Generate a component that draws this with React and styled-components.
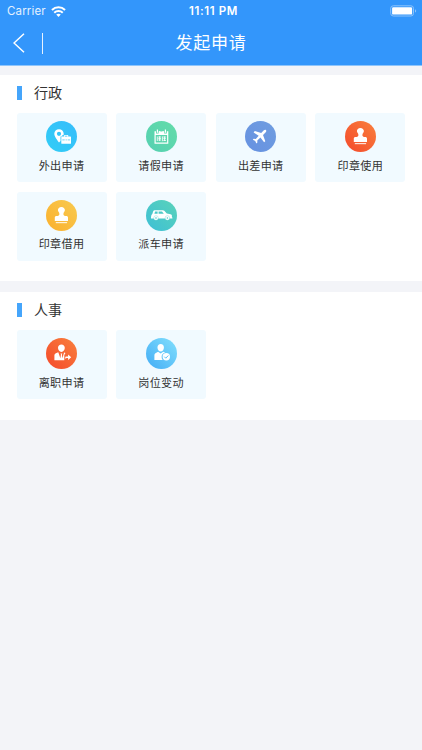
import React from "react";
import styled, { createGlobalStyle } from "styled-components";

const GlobalStyle = createGlobalStyle`
  * { box-sizing: border-box; }
  body {
    margin: 0;
    background: #f3f4f8;
    font-family: Inter, "Noto Sans CJK SC", sans-serif;
  }
`;

const Screen = styled.main`
  width: 100%;
  min-height: 750px;
  background: #f3f4f8;
`;

const Header = styled.header`
  height: 66px;
  background: #3396fb;
  border-bottom: 1px solid #8fc5fb;
  color: #fff;
`;

const StatusBar = styled.div`
  height: 22px;
  padding: 0 5px 0 7px;
  display: grid;
  grid-template-columns: 1fr auto 1fr;
  align-items: center;
  font-size: 11.5px;
  line-height: 22px;
`;

const Carrier = styled.div`
  display: flex;
  align-items: center;
  gap: 5px;
  letter-spacing: 0.15px;
  color: #e3f1ff;
`;

const Clock = styled.time`
  font-weight: 600;
  font-size: 11.5px;
  letter-spacing: 0.65px;
  padding-left: 3px;
`;

const BatterySlot = styled.div`
  display: flex;
  justify-content: flex-end;
`;

const NavBar = styled.div`
  height: 42px;
  display: grid;
  grid-template-columns: 60px 1fr 60px;
  align-items: center;
`;

const BackButton = styled.button`
  display: flex;
  align-items: center;
  gap: 17px;
  padding: 0 0 0 13px;
  border: 0;
  background: none;
`;

const Divider = styled.span`
  width: 1px;
  height: 21px;
  background: #e6f2ff;
`;

const PageTitle = styled.h1`
  margin: 0;
  text-align: center;
  font-size: 17px;
  line-height: 24px;
  font-weight: 400;
  letter-spacing: 0.7px;
`;

const Section = styled.section`
  height: ${(p) => p.$height}px;
  margin-top: ${(p) => p.$gap}px;
  padding: 0 16.5px;
  background: #fff;
`;

const SectionTitle = styled.h2`
  display: flex;
  align-items: center;
  gap: 12.5px;
  height: 37px;
  margin: 0 0 1.5px;
  font-size: 14.1px;
  line-height: 20px;
  font-weight: 400;
  color: #333;

  &::before {
    content: "";
    width: 5px;
    height: 14px;
    background: #45a5fb;
  }
`;

const CardGrid = styled.div`
  display: grid;
  grid-template-columns: repeat(4, 90px);
  column-gap: 9.6px;
  row-gap: 9.5px;
`;

const Card = styled.button`
  display: flex;
  flex-direction: column;
  align-items: center;
  height: 69px;
  padding: 8px 0 0;
  border: 0;
  border-radius: 3px;
  background: #f1faff;
  font-family: inherit;
`;

const Badge = styled.span`
  display: flex;
  width: 31px;
  height: 31px;
  border-radius: 50%;
  background: linear-gradient(to bottom left, ${(p) => p.$from}, ${(p) => p.$to});
`;

const Label = styled.span`
  margin-top: 5.5px;
  font-size: 11.1px;
  line-height: 16px;
  letter-spacing: 0.3px;
  color: #333;
`;

const Glyph = ({ children }) => (
  <svg width="31" height="31" viewBox="0 0 31 31" fill="#fff">
    {children}
  </svg>
);

const OutingIcon = () => (
  <Glyph>
    <path
      fillRule="evenodd"
      d="M13 8.200c2.700 0 4.700 2 4.700 4.600 0 .5-.1 1-.3 1.500h-1.200l-.5 1.300h-1.200v4.400L13 21.600c-1.400-2.300-4.700-5.700-4.700-8.800 0-2.600 2-4.600 4.700-4.600Zm0 2.500a2.100 2.100 0 1 0 0 4.200 2.100 2.100 0 0 0 0-4.200Z"
    />
    <path
      fillRule="evenodd"
      d="M18.200 15.400v-1.500h4v1.500h2.200c.4 0 .6.3.6.6v6.200c0 .4-.2.6-.6.6h-8.500c-.4 0-.6-.2-.6-.6v-6.200c0-.3.2-.6.6-.6h2.300Zm.8 0h2.400v-.7H19v.7Z"
    />
    <path d="M16.300 18.900h2.400m.9 0h1.200m.9 0h2.400" stroke="#36c5f7" strokeWidth=".7" />
  </Glyph>
);

const LeaveIcon = () => (
  <Glyph>
    <path
      fillRule="evenodd"
      d="M8.500 10.300h1.500v2.200h2.600v-2h5.600v2h2.600v-2.200h1.500v12.400H8.500V10.300Zm1.200 3.700v7.500h11.400V14H9.700Z"
    />
    <path d="M11.400 8.500v3.200M13.700 10v1.800M17.100 10v1.800M19.400 8.500v3.200" stroke="#fff" strokeWidth="1.200" />
    <path
      d="M11.300 15.500v4.500M12.300 16h2.700M12.300 17.600h2.700M13.600 15.300v4.700M12.400 19h2.500M16.400 15.400v4.800M17.300 16h2.600M17.300 17.700h2.600M18.600 15.500v4.500M17.400 19.500h2.500"
      stroke="#fff"
      strokeWidth=".85"
    />
  </Glyph>
);

const PlaneIcon = () => (
  <Glyph>
    <path d="M20.900 9c.8.8.3 1.900-.4 2.600l-2.500 2.500 2.300 6.100-1.200 1-3.700-4.600-3.100 2.900.1 2-1 .9-1.200-2.300-2.400-1.300.9-1 2.100.2 2.900-3.200-5.100-3.400 1.200-1.300 6.400 2 2.400-2.500c.7-.7 1.600-1.200 2.300-.6Z" />
  </Glyph>
);

const StampIcon = () => (
  <Glyph>
    <path d="M15.400 6.900c2.100 0 3.500 1.400 3.500 3.200 0 1.500-1.500 2.300-1.500 4 0 1.100.6 1.800 1.800 1.800h1.100c1 0 1.700.7 1.700 1.600V21H8.800v-3.500c0-.9.7-1.600 1.700-1.600h1.100c1.200 0 1.800-.7 1.800-1.800 0-1.700-1.500-2.500-1.500-4 0-1.800 1.400-3.200 3.500-3.200Z" />
    <path d="M9.800 22h11.300v1.200H9.800z" opacity=".8" />
  </Glyph>
);

const CarIcon = () => (
  <Glyph>
    <path
      fillRule="evenodd"
      d="M9.200 10.200h7.700c.6 0 1 .2 1.400.6l2.500 2.800 3.700.6c.9.200 1.400.8 1.400 1.600v1.400l.5.300v1H5v-1.200l.4-2.200.9-1 1-3c.2-.6.8-.9 1.900-.9Zm-.1 1.400-.7 2.100h3.200v-2.100H9.100Zm3.500 0v2.100h5.200l-1.400-1.700c-.2-.3-.5-.4-.9-.4h-2.900Z"
    />
    <circle cx="10" cy="18" r="2.300" stroke="#49c8c8" strokeWidth=".3" />
    <circle cx="21.400" cy="18" r="2.300" stroke="#49c8c8" strokeWidth=".3" />
    <circle cx="10" cy="18" r=".8" fill="#49c8c8" />
    <circle cx="21.400" cy="18" r=".8" fill="#49c8c8" />
  </Glyph>
);

const ResignIcon = () => (
  <Glyph>
    <path d="M15.400 6.400c2 0 3.400 1.400 3.400 3.400s-1.400 4.100-3.400 4.100-3.400-2.100-3.400-4.100 1.400-3.400 3.400-3.400Z" />
    <path d="m12.300 14.200 2.100 6 .5-3.800-.4-1h1.800l-.4 1 .5 3.800 1.700-5.800 1.400.7-1.200 2v5.200H8.400v-4.900c0-1.300.7-2 2-2.500l1.900-.7Z" />
    <path d="M19.200 20.800v-1.200c0-.8.5-1.200 1.300-1.200h1.600v-2l3.100 2.800-3.100 2.800v-1.900h-1.200c-.7 0-1.100.2-1.700.7Z" />
  </Glyph>
);

const TransferIcon = () => (
  <Glyph>
    <path d="M14.700 6c2 0 3.200 1.400 3.200 3.500s-1.200 4.100-3.200 4.100-3.200-2-3.200-4.100S12.700 6 14.700 6Z" />
    <path d="m12.100 13.700 2.600 1.700 2.500-1.700 2.100.9c-2.200.4-3.700 2-3.700 4.400 0 1.200.4 2.200 1.100 3H8.400v-4.500c0-1.300.6-2.200 1.900-2.700l1.800-1.100Z" />
    <circle cx="20.300" cy="18.800" r="3.700" />
    <path d="m18.300 18.700 1.500 1.500 2.500-2.700" fill="none" stroke="#4cb9f6" strokeWidth=".9" />
  </Glyph>
);

const WifiIcon = () => (
  <svg width="15" height="11" viewBox="0 0 14 10.600" fill="none" stroke="#fff" strokeWidth="2">
    <path d="M.7 3.900c3.600-3.500 9-3.500 12.600 0" />
    <path d="M2.900 6.500c2.300-2.200 5.900-2.200 8.200 0" />
    <path d="M7 10.500 4.800 8.300c1.200-1.100 3.200-1.100 4.400 0L7 10.500Z" fill="#fff" stroke="none" />
  </svg>
);

const BatteryIcon = () => (
  <svg width="27" height="12" viewBox="0 0 27 12">
    <rect x=".7" y=".8" width="22.800" height="10.200" rx="2.600" fill="none" stroke="#8cc3fb" />
    <rect x="2.100" y="2.200" width="20" height="7.400" rx="1.200" fill="#fff" />
    <path d="M25 4.200c1.600.5 1.600 2.900 0 3.400V4.200Z" fill="#8cc3fb" />
  </svg>
);

const BackIcon = () => (
  <svg width="12" height="20" viewBox="0 0 12 20" fill="none" stroke="#fff" strokeWidth="1.500">
    <path d="M11 .8 1 10l10 9.200" />
  </svg>
);

const SECTIONS = [
  {
    title: "行政",
    height: 206.5,
    gap: 8.5,
    items: [
      { label: "外出申请", icon: OutingIcon, from: "#36bdfb", to: "#32cdf6" },
      { label: "请假申请", icon: LeaveIcon, from: "#63dca9", to: "#55d0b2" },
      { label: "出差申请", icon: PlaneIcon, from: "#6f9de0", to: "#6691e1" },
      { label: "印章使用", icon: StampIcon, from: "#f9803d", to: "#f4492b" },
      { label: "印章借用", icon: StampIcon, from: "#f8ca50", to: "#fbb02d" },
      { label: "派车申请", icon: CarIcon, from: "#5ad3b9", to: "#3dbfd6" },
    ],
  },
  {
    title: "人事",
    height: 128.5,
    gap: 10.5,
    items: [
      { label: "离职申请", icon: ResignIcon, from: "#f9803d", to: "#f4492b" },
      { label: "岗位变动", icon: TransferIcon, from: "#82e0fd", to: "#43acf5" },
    ],
  },
];

export default function App() {
  return (
    <Screen>
      <GlobalStyle />
      <Header>
        <StatusBar>
          <Carrier>
            Carrier
            <WifiIcon />
          </Carrier>
          <Clock>11:11 PM</Clock>
          <BatterySlot>
            <BatteryIcon />
          </BatterySlot>
        </StatusBar>
        <NavBar>
          <BackButton aria-label="返回">
            <BackIcon />
            <Divider />
          </BackButton>
          <PageTitle>发起申请</PageTitle>
        </NavBar>
      </Header>
      {SECTIONS.map((section) => (
        <Section key={section.title} $height={section.height} $gap={section.gap}>
          <SectionTitle>{section.title}</SectionTitle>
          <CardGrid>
            {section.items.map(({ label, icon: Icon, from, to }) => (
              <Card key={label}>
                <Badge $from={from} $to={to}>
                  <Icon />
                </Badge>
                <Label>{label}</Label>
              </Card>
            ))}
          </CardGrid>
        </Section>
      ))}
    </Screen>
  );
}
